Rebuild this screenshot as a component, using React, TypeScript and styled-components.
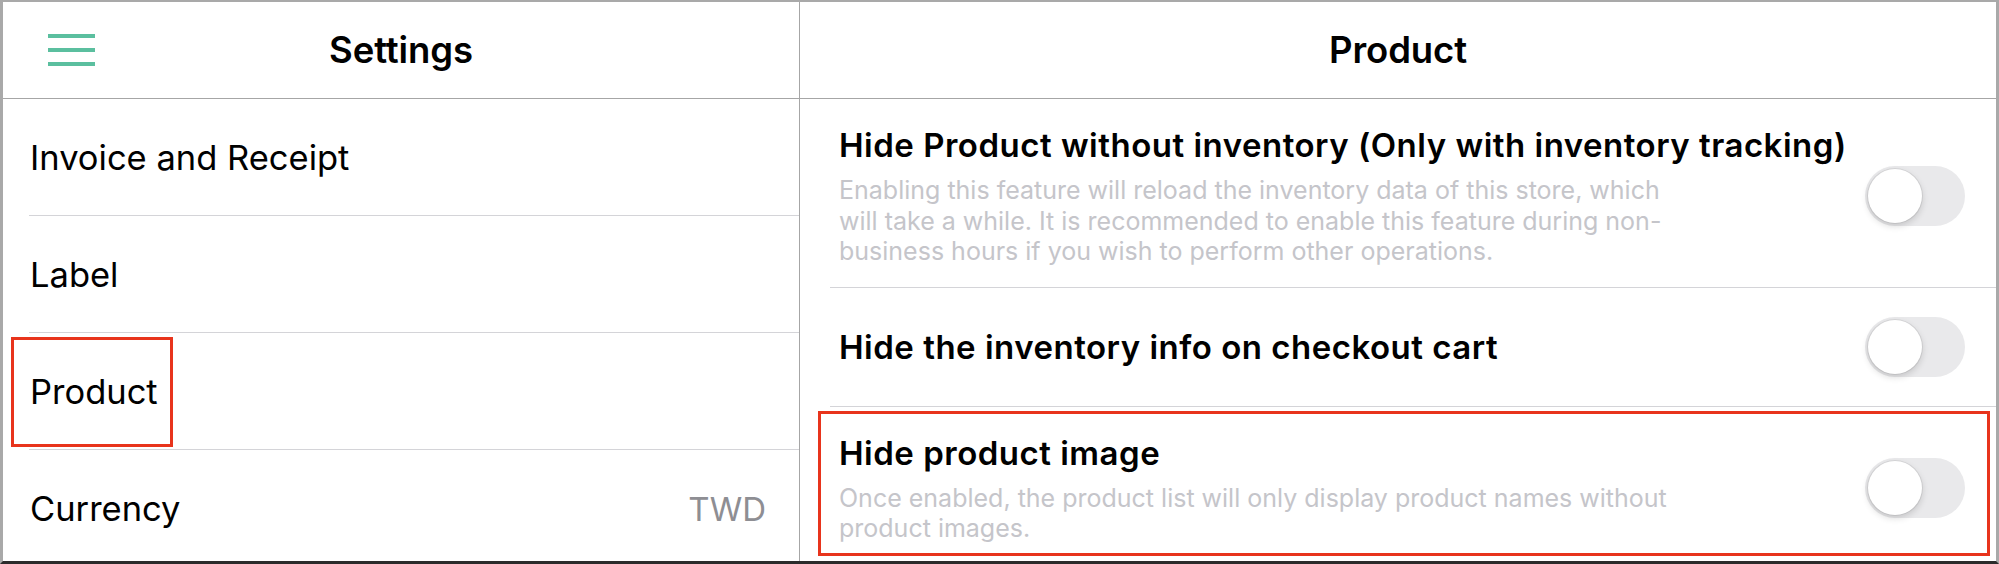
import React from 'react'
import styled, { createGlobalStyle } from 'styled-components'

const GlobalStyle = createGlobalStyle`
  * {
    box-sizing: border-box;
  }

  body {
    margin: 0;
    background: #ffffff;
    font-family: Inter, 'Noto Sans', sans-serif;
    color: #000000;
  }
`

const colors = {
  border: '#a9a9a9',
  divider: '#d4d4d8',
  headerLine: '#a6a6a6',
  teal: '#5bbf9f',
  gray: '#8e8e93',
  hint: '#c5c5ca',
  trackOff: '#e9e9eb',
  highlight: '#e8341c',
}

const Frame = styled.div`
  display: grid;
  grid-template-columns: 797px 1fr;
  width: 1999px;
  height: 564px;
  overflow: hidden;
  border-top: 2px solid ${colors.border};
  border-left: 3px solid ${colors.border};
  border-right: 3px solid ${colors.border};
  border-bottom: 3px solid #2b2b2b;
`

const Panel = styled.section<{ $divider?: boolean }>`
  display: flex;
  flex-direction: column;
  min-width: 0;
  border-right: ${({ $divider }) => ($divider ? `1px solid ${colors.headerLine}` : 'none')};
`

const Header = styled.header`
  display: grid;
  grid-template-columns: 1fr auto 1fr;
  align-items: center;
  height: 97px;
  flex-shrink: 0;
  border-bottom: 1px solid ${colors.headerLine};
`

const HeaderTitle = styled.h1`
  grid-column: 2;
  margin: 0;
  font-size: 36.5px;
  font-weight: 600;
  letter-spacing: -0.1px;
`

const MenuButton = styled.button`
  grid-column: 1;
  justify-self: start;
  display: flex;
  flex-direction: column;
  gap: 10px;
  margin-left: 45px;
  padding: 0;
  border: none;
  background: none;
`

const MenuLine = styled.span`
  display: block;
  width: 47px;
  height: 4px;
  background: ${colors.teal};
`

const MenuRow = styled.div<{ $last?: boolean }>`
  position: relative;
  display: flex;
  justify-content: space-between;
  align-items: center;
  height: 117px;
  flex-shrink: 0;
  margin-left: 26px;
  padding: 0 33px 0 1px;
  border-bottom: ${({ $last }) => ($last ? 'none' : `1px solid ${colors.divider}`)};
  font-size: 34.5px;
`

const MenuValue = styled.span`
  color: ${colors.gray};
  font-size: 33px;
`

const Highlight = styled.div`
  position: absolute;
  border: 3px solid ${colors.highlight};
  pointer-events: none;
`

const MenuHighlight = styled(Highlight)`
  left: -18px;
  top: 4px;
  width: 162px;
  height: 110px;
`

const OptionHighlight = styled(Highlight)`
  left: -12px;
  right: 6px;
  top: 4px;
  height: 145px;
`

const OptionRow = styled.div<{ $tall?: boolean; $last?: boolean }>`
  position: relative;
  display: flex;
  align-items: center;
  gap: 12px;
  flex-shrink: 0;
  min-height: ${({ $tall }) => ($tall ? 'auto' : '119px')};
  margin-left: 30px;
  padding: ${({ $tall }) => ($tall ? '26px 31px 20px 9px' : '0 31px 0 9px')};
  border-bottom: ${({ $last }) => ($last ? 'none' : `1px solid ${colors.divider}`)};
`

const OptionText = styled.div`
  flex: 1;
  min-width: 0;
`

const OptionTitle = styled.div`
  font-size: 33px;
  font-weight: 600;
  line-height: 40px;
  letter-spacing: 0.5px;
  white-space: nowrap;
`

const OptionHint = styled.p`
  max-width: 850px;
  margin: 10px 0 0;
  color: ${colors.hint};
  font-size: 25px;
  line-height: 30.5px;
`

const Track = styled.span`
  position: relative;
  display: block;
  width: 100px;
  height: 60px;
  flex-shrink: 0;
  border-radius: 30px;
  background: ${colors.trackOff};
`

const Knob = styled.span`
  position: absolute;
  top: 3px;
  left: 3px;
  width: 54px;
  height: 54px;
  border-radius: 50%;
  background: #ffffff;
  box-shadow: 0 0 0 1px rgba(0, 0, 0, 0.07), 0 3px 7px rgba(0, 0, 0, 0.16);
`

const Switch: React.FC = () => (
  <Track>
    <Knob />
  </Track>
)

interface OptionProps {
  title: string
  hint?: string
  highlighted?: boolean
  last?: boolean
}

const Option: React.FC<OptionProps> = ({ title, hint, highlighted, last }) => (
  <OptionRow $tall={!!hint} $last={last}>
    {highlighted && <OptionHighlight />}
    <OptionText>
      <OptionTitle>{title}</OptionTitle>
      {hint && <OptionHint>{hint}</OptionHint>}
    </OptionText>
    <Switch />
  </OptionRow>
)

const App: React.FC = () => (
  <>
    <GlobalStyle />
    <Frame>
      <Panel $divider>
        <Header>
          <MenuButton aria-label="Menu">
            <MenuLine />
            <MenuLine />
            <MenuLine />
          </MenuButton>
          <HeaderTitle>Settings</HeaderTitle>
        </Header>
        <MenuRow>Invoice and Receipt</MenuRow>
        <MenuRow>Label</MenuRow>
        <MenuRow>
          <MenuHighlight />
          Product
        </MenuRow>
        <MenuRow $last>
          Currency
          <MenuValue>TWD</MenuValue>
        </MenuRow>
      </Panel>
      <Panel>
        <Header>
          <HeaderTitle>Product</HeaderTitle>
        </Header>
        <Option
          title="Hide Product without inventory (Only with inventory tracking)"
          hint="Enabling this feature will reload the inventory data of this store, which will take a while. It is recommended to enable this feature during non-business hours if you wish to perform other operations."
        />
        <Option title="Hide the inventory info on checkout cart" />
        <Option
          title="Hide product image"
          hint="Once enabled, the product list will only display product names without product images."
          highlighted
          last
        />
      </Panel>
    </Frame>
  </>
)

export default App
